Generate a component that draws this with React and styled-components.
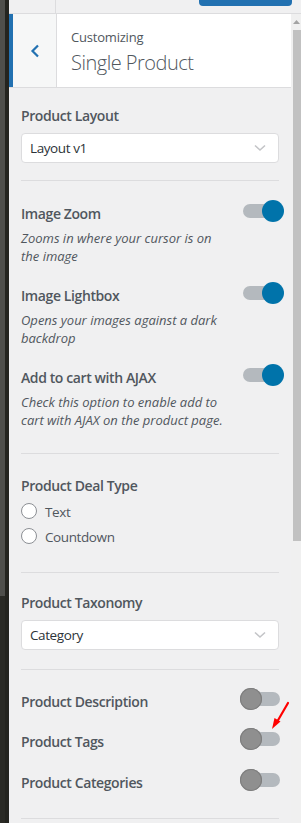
import React from "react";
import styled, { createGlobalStyle } from "styled-components";

const Global = createGlobalStyle`
  html, body { margin: 0; padding: 0; height: 823px; overflow: hidden; background: #f0f0f1; }
  #root { height: 823px; }
  * { box-sizing: border-box; }
`;

const FONT = `"Open Sans", "Noto Sans", sans-serif`;

const Shell = styled.div`
  display: flex;
  height: 823px;
  font-family: ${FONT};
  color: #50575e;
  position: relative;
`;

const Edge = styled.div`
  width: 9px;
  display: flex;
  flex-shrink: 0;
`;
const EdgeLight = styled.div`
  width: 5px;
  background: linear-gradient(to bottom, #4f4f4b 0, #4f4f4b 596px, #2a2a25 596px);
`;
const EdgeDark = styled.div`
  width: 4px;
  background: #24241f;
`;

const Main = styled.div`
  flex: 1;
  display: flex;
  flex-direction: column;
  min-width: 0;
`;

const TopBar = styled.div`
  height: 14px;
  display: flex;
  border-bottom: 1px solid #dcdcde;
  background: #f0f0f1;
  flex-shrink: 0;
`;
const TopCell = styled.div`
  width: 47px;
  border-right: 1px solid #dcdcde;
`;
const TopSpacer = styled.div`
  width: 143px;
`;
const PublishButton = styled.div`
  width: 93px;
  height: 6px;
  background: #2271b1;
  border-radius: 0 0 4px 4px;
`;

const Body = styled.div`
  flex: 1;
  display: flex;
  min-height: 0;
`;

const Panel = styled.div`
  flex: 1;
  display: flex;
  flex-direction: column;
  min-width: 0;
`;

const Header = styled.div`
  height: 74px;
  display: flex;
  border-bottom: 1px solid #dcdcde;
  flex-shrink: 0;
`;

const BackButton = styled.div`
  width: 48px;
  border-left: 4px solid #2271b1;
  border-right: 1px solid #dcdcde;
  background: #f6f7f7;
  display: flex;
  align-items: center;
  justify-content: center;
  padding-top: 1px;
`;

const TitleBox = styled.div`
  flex: 1;
  background: #fff;
  padding: 14px 0 0 14px;
  display: flex;
  flex-direction: column;
`;
const Small = styled.div`
  font-size: 13px;
  line-height: 18px;
  letter-spacing: -0.2px;
  color: #50575e;
`;
const Title = styled.div`
  font-size: 20px;
  font-weight: 300;
  line-height: 28px;
  margin-top: 3px;
  letter-spacing: -0.5px;
  color: #50575e;
`;

const Content = styled.div`
  padding: 0 12px;
  display: flex;
  flex-direction: column;
`;

const Section = styled.div`
  padding-top: ${(p) => p.$top}px;
  padding-bottom: ${(p) => p.$bottom}px;
  border-bottom: 1px solid #dcdcde;
  display: flex;
  flex-direction: column;
`;

const Label = styled.div`
  font-size: 14px;
  font-weight: 600;
  line-height: 20px;
  letter-spacing: -0.4px;
  color: #50575e;
`;

const Select = styled.div`
  margin-top: 7px;
  height: 30px;
  background: #fff;
  border: 1px solid #dcdcde;
  border-radius: 4px;
  display: flex;
  align-items: center;
  justify-content: space-between;
  padding: 0 12px 0 8px;
  font-size: 13.5px;
  letter-spacing: -0.4px;
  color: #2c3338;
`;

const ControlRow = styled.div`
  display: flex;
  justify-content: space-between;
  align-items: flex-start;
  margin-top: ${(p) => p.$gap || 0}px;
  & > ${Label} { margin-top: 4px; }
`;

const Desc = styled.div`
  margin-top: 5px;
  font-size: 13px;
  font-style: italic;
  line-height: 18px;
  color: #50575e;
  max-width: 204px;
`;

const Toggle = styled.div`
  width: 44px;
  height: 22px;
  position: relative;
  flex-shrink: 0;
  margin-right: -5px;
  &::before {
    content: "";
    position: absolute;
    left: 3px;
    top: 4px;
    width: 37px;
    height: 14px;
    border-radius: 7px;
    background: #b4b9be;
  }
  &::after {
    content: "";
    position: absolute;
    top: 0;
    left: ${(p) => (p.$on ? 22 : 0)}px;
    width: 22px;
    height: 22px;
    border-radius: 50%;
    background: ${(p) => (p.$on ? "#0073aa" : "#8f8f8f")};
    box-shadow: ${(p) => (p.$on ? "none" : "inset 0 0 0 1px #7e7e7e")};
  }
`;

const RadioRow = styled.div`
  display: flex;
  align-items: center;
  gap: 8px;
  height: 20px;
  margin-top: ${(p) => p.$gap}px;
  font-size: 13.5px;
  letter-spacing: -0.4px;
  color: #50575e;
`;
const RadioCircle = styled.span`
  width: 16px;
  height: 16px;
  border-radius: 50%;
  border: 1px solid #8c8f94;
  background: #fff;
  margin-top: -2px;
`;

const Scrollbar = styled.div`
  width: 10px;
  flex-shrink: 0;
  background: #f0f0f0;
  display: flex;
  flex-direction: column;
  align-items: flex-end;
`;
const ScrollArrow = styled.div`
  width: 8px;
  height: 16px;
  display: flex;
  align-items: center;
  justify-content: center;
  margin-right: 1px;
`;
const ScrollThumb = styled.div`
  width: 8px;
  height: 511px;
  background: #c1c1c1;
`;

const Arrow = styled.svg`
  position: absolute;
  left: 266px;
  top: 700px;
`;

const Chevron = () => (
  <svg width="10" height="14" viewBox="0 0 10 14">
    <path d="M8 1.5 L2.5 7 L8 12.5" fill="none" stroke="#2271b1" strokeWidth="2.2" />
  </svg>
);

const SelectCaret = () => (
  <svg width="12" height="8" viewBox="0 0 12 8">
    <path d="M1 1.5 L6 6 L11 1.5" fill="none" stroke="#c3c4c7" strokeWidth="1.6" />
  </svg>
);

export default function App() {
  return (
    <>
      <Global />
      <Shell>
        <Edge>
          <EdgeLight />
          <EdgeDark />
        </Edge>
        <Main>
          <TopBar>
            <TopCell />
            <TopSpacer />
            <PublishButton />
          </TopBar>
          <Body>
            <Panel>
              <Header>
                <BackButton>
                  <Chevron />
                </BackButton>
                <TitleBox>
                  <Small>Customizing</Small>
                  <Title>Single Product</Title>
                </TitleBox>
              </Header>
              <Content>
                <Section $top={18} $bottom={17}>
                  <Label>Product Layout</Label>
                  <Select>
                    <span>Layout v1</span>
                    <SelectCaret />
                  </Select>
                </Section>
                <Section $top={19} $bottom={24}>
                  <ControlRow>
                    <Label>Image Zoom</Label>
                    <Toggle $on />
                  </ControlRow>
                  <Desc>Zooms in where your cursor is on the image</Desc>
                  <ControlRow $gap={17}>
                    <Label>Image Lightbox</Label>
                    <Toggle $on />
                  </ControlRow>
                  <Desc>Opens your images against a dark backdrop</Desc>
                  <ControlRow $gap={17}>
                    <Label>Add to cart with AJAX</Label>
                    <Toggle $on />
                  </ControlRow>
                  <Desc>Check this option to enable add to cart with AJAX on the product page.</Desc>
                </Section>
                <Section $top={22} $bottom={25}>
                  <Label>Product Deal Type</Label>
                  <RadioRow $gap={6}>
                    <RadioCircle />
                    Text
                  </RadioRow>
                  <RadioRow $gap={5}>
                    <RadioCircle />
                    Countdown
                  </RadioRow>
                </Section>
                <Section $top={20} $bottom={19}>
                  <Label>Product Taxonomy</Label>
                  <Select>
                    <span>Category</span>
                    <SelectCaret />
                  </Select>
                </Section>
                <Section $top={18} $bottom={25}>
                  <ControlRow>
                    <Label>Product Description</Label>
                    <Toggle />
                  </ControlRow>
                  <ControlRow $gap={16}>
                    <Label>Product Tags</Label>
                    <Toggle />
                  </ControlRow>
                  <ControlRow $gap={17}>
                    <Label>Product Categories</Label>
                    <Toggle />
                  </ControlRow>
                </Section>
              </Content>
            </Panel>
            <Scrollbar>
              <ScrollArrow>
                <svg width="7" height="4" viewBox="0 0 7 4">
                  <path d="M0 4 L3.5 0 L7 4 Z" fill="#a3a3a3" />
                </svg>
              </ScrollArrow>
              <ScrollThumb />
            </Scrollbar>
          </Body>
        </Main>
        <Arrow width="26" height="34" viewBox="0 0 26 34">
          <path d="M22 3 L11 22" stroke="#ff0000" strokeWidth="2.2" strokeLinecap="round" fill="none" />
          <path d="M6 29 L8.5 18 L14.5 21.5 Z" fill="#ff0000" />
        </Arrow>
      </Shell>
    </>
  );
}
